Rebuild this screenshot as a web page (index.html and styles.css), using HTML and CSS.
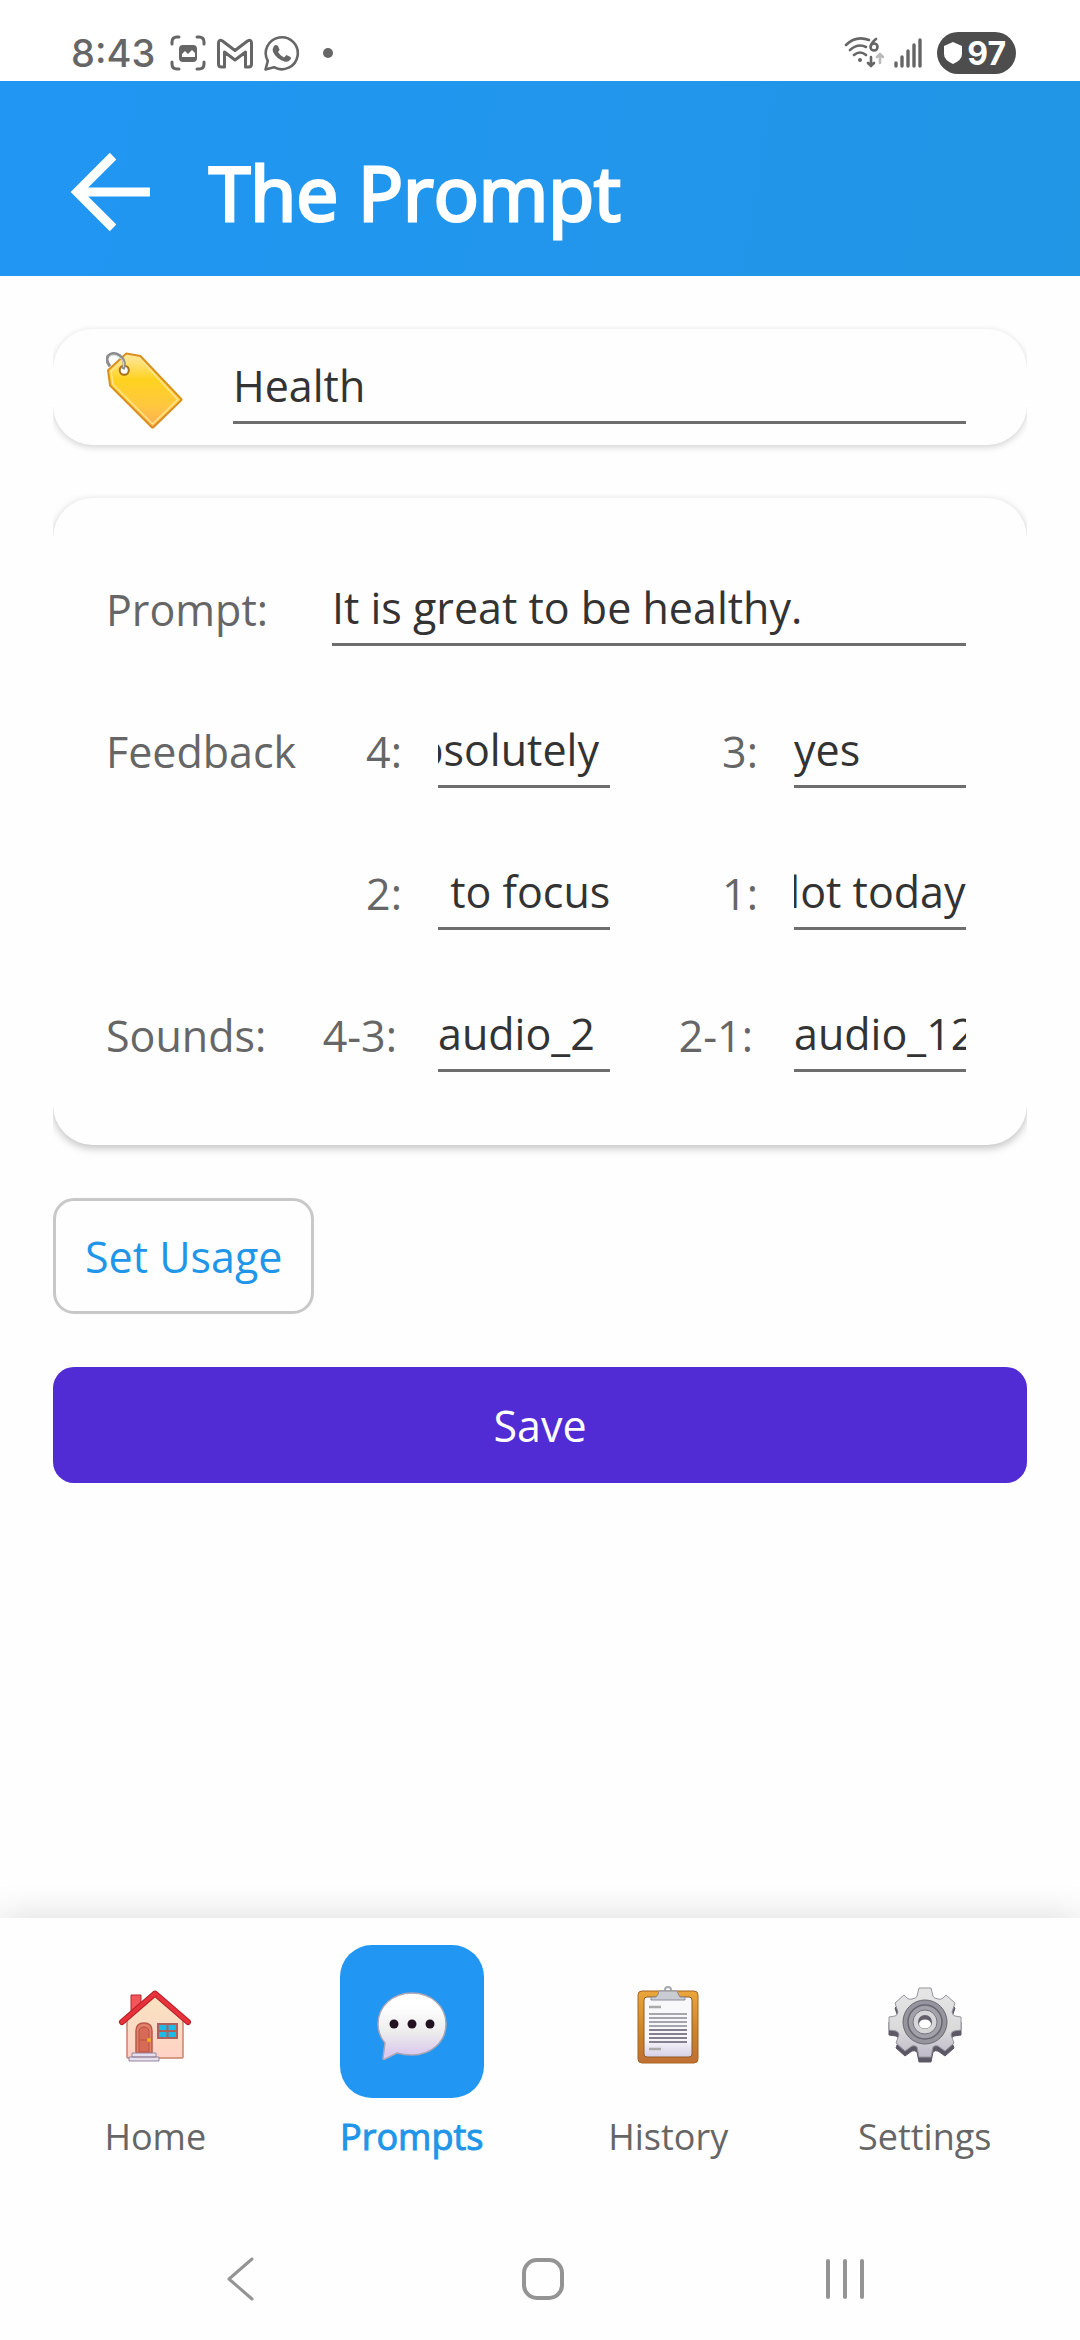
FILE: index.html
```html
<!DOCTYPE html>
<html lang="en">
<head>
  <meta charset="utf-8">
  <meta name="viewport" content="width=device-width, initial-scale=1">
  <title>The Prompt</title>
  <link rel="stylesheet" href="styles.css">
</head>
<body>
  <!-- Phone status bar -->
  <div class="status-bar">
    <div class="status-left">
      <span class="clock">8:43</span>
      <svg class="status-icon" viewBox="0 0 36 36">
        <g fill="none" stroke="#666" stroke-width="3" stroke-linecap="round">
          <path d="M2 9V7q0-5 5-5h2M27 2h2q5 0 5 5v2M34 27v2q0 5-5 5h-2M9 34H7q-5 0-5-5v-2"/>
        </g>
        <rect x="9" y="10" width="18" height="17" rx="4" fill="#666"/>
        <path d="M12 22v-3l3-3 3 3 4-4 3 3v4z" fill="#fff"/>
      </svg>
      <svg class="status-icon" viewBox="0 0 36 36">
        <path d="M1.500 29V8q0-4 4-2l12.500 9.500L30.500 6q4-2 4 2v21q0 3-3 3h-3V17L18 25 7.500 17v15h-3q-3 0-3-3z" fill="none" stroke="#666" stroke-width="3" stroke-linejoin="round"/>
      </svg>
      <svg class="status-icon" viewBox="0 0 36 36">
        <path d="M1.500 34.500l2.300-8.500A16 16 0 1 1 10 32.200z" fill="none" stroke="#666" stroke-width="2.600" stroke-linejoin="round"/>
        <path d="M10 11q2-2 4 0l1.500 3.500q0 1-1.500 2.500 2 3.500 6 5.500l2.500-2.500 4 2q1 .5 0 2.500-2.500 3-6 2-8-2.500-11.500-9.500-1-3.500 1-6z" fill="#666"/>
      </svg>
      <span class="dot"></span>
    </div>
    <div class="status-right">
      <svg class="wifi-icon" viewBox="0 0 42 34">
        <g fill="none" stroke="#666" stroke-width="2.600" stroke-linecap="round">
          <path d="M2 9Q12-1 25 4M6 14q8-7 16-3M10 19q6-5 12 0"/>
          <path d="M27 21v9M24 27l3 3 3-3"/>
          <path d="M32 3q-5 4-5 7"/>
          <circle cx="30" cy="11" r="3.500"/>
          <path d="M36 27v-9M33 21l3-3 3 3" stroke="#bbb"/>
        </g>
        <circle cx="16" cy="24" r="2" fill="#666"/>
      </svg>
      <svg class="signal-icon" viewBox="0 0 28 32">
        <path d="M2 26v3M8 20v9M14 14v15M20 8v21M26 3v26" stroke="#666" stroke-width="3.400" stroke-linecap="round"/>
      </svg>
      <span class="battery">
        <svg class="shield-icon" viewBox="0 0 20 24">
          <path d="M10 1l9 4v8q0 6-9 10Q1 19 1 13V5z" fill="#fff"/>
        </svg>97
      </span>
    </div>
  </div>

  <header class="header">
    <button class="back-btn" aria-label="Back">
      <svg viewBox="0 0 80 80">
        <path d="M42 5L7 40l35 35M7 40h71" fill="none" stroke="#fff" stroke-width="9"/>
      </svg>
    </button>
    <h1 class="title">The Prompt</h1>
  </header>

  <main class="content">
    <div class="card-clip">
      <div class="card tag-card">
        <label class="tag-label" for="category" aria-label="Category">
          <svg viewBox="0 0 76 76">
            <defs>
              <linearGradient id="tagFill" x1="0" y1="0" x2="0" y2="1">
                <stop offset="0" stop-color="#ffe9a8"/>
                <stop offset="0.350" stop-color="#ffd21f"/>
                <stop offset="0.700" stop-color="#ffc83f"/>
                <stop offset="1" stop-color="#ffac55"/>
              </linearGradient>
            </defs>
            <path d="M20 1.500L34 4l40 42q1 1 0 2L47 74q-1 1-2 0L4 33 2 18z" fill="url(#tagFill)" stroke="#d99020" stroke-width="2" stroke-linejoin="round"/>
            <path d="M21 4.500l12 2L71 47 46 71 7 32 5 19z" fill="none" stroke="#ffe58a" stroke-width="1.500" stroke-linejoin="round"/>
            <circle cx="18" cy="18" r="4.500" fill="#fff" stroke="#a8701a" stroke-width="2"/>
            <path d="M17 17q3-8-3-13-7-5-12 0-3 4 2 10" fill="none" stroke="#8d8d8d" stroke-width="3"/>
            <path d="M17 15q2-6-4-10-6-4-10 0" fill="none" stroke="#d8d8d8" stroke-width="1"/>
          </svg>
        </label>
        <input class="entry" id="category" type="text" value="Health">
      </div>
    </div>

    <div class="card-clip">
      <div class="card prompt-card">
        <div class="row row-prompt">
          <label class="label" for="prompt">Prompt:</label>
          <input class="entry" id="prompt" type="text" value="It is great to be healthy.">
        </div>
        <div class="row">
          <span class="label">Feedback</span>
          <label class="label num" for="feedback4">4:</label>
          <input class="entry scroll-end" id="feedback4" type="text" value="Absolutely ">
          <label class="label num" for="feedback3">3:</label>
          <input class="entry" id="feedback3" type="text" value="yes">
        </div>
        <div class="row">
          <span class="label"></span>
          <label class="label num" for="feedback2">2:</label>
          <input class="entry scroll-end" id="feedback2" type="text" value="Need to focus">
          <label class="label num" for="feedback1">1:</label>
          <input class="entry scroll-end" id="feedback1" type="text" value="A lot today">
        </div>
        <div class="row">
          <span class="label">Sounds:</span>
          <label class="label range" for="sound43">4-3:</label>
          <input class="entry" id="sound43" type="text" value="audio_2">
          <label class="label range" for="sound21">2-1:</label>
          <input class="entry" id="sound21" type="text" value="audio_12">
        </div>
      </div>
    </div>

    <button class="btn usage-btn">Set Usage</button>
    <button class="btn save-btn">Save</button>
  </main>

  <nav class="tab-bar">
    <a class="tab" href="#home">
      <span class="tab-icon">
        <svg viewBox="0 0 80 80">
          <defs>
            <linearGradient id="wall" x1="0" y1="0" x2="0" y2="1">
              <stop offset="0" stop-color="#f8e3c0"/>
              <stop offset="1" stop-color="#ffd2c6"/>
            </linearGradient>
          </defs>
          <path d="M12 34L40 10l28 24v38q0 1-1 1H13q-1 0-1-1z" fill="url(#wall)" stroke="#c98468" stroke-width="1.500"/>
          <path d="M16 27V10h10v9z" fill="#f4555a" stroke="#b8272d" stroke-width="1"/>
          <path d="M7 37L40 8.500 73 37" fill="none" stroke="#b41f27" stroke-width="6" stroke-linecap="round" stroke-linejoin="round"/>
          <path d="M7 37L40 8.500 73 37" fill="none" stroke="#e8323b" stroke-width="4" stroke-linecap="round" stroke-linejoin="round"/>
          <path d="M21 68V46q0-8 8-8t8 8v22z" fill="#e2806c" stroke="#b75a48" stroke-width="1.500"/>
          <path d="M24 67V47q0-5 5-5t5 5v20zM24 55h10" fill="#d86a58" stroke="#b9523f" stroke-width="1"/>
          <circle cx="34" cy="55" r="2" fill="#f6b01c"/>
          <path d="M43 39h19v14H43z" fill="#1fb9e6" stroke="#b0605a" stroke-width="2"/>
          <path d="M52.500 39v14M43 46h19" stroke="#b0605a" stroke-width="2"/>
          <path d="M17 68h24v4H17zM14 72h30v4H14z" fill="#e8dfee" stroke="#94849c" stroke-width="1"/>
        </svg>
      </span>
      <span class="tab-label">Home</span>
    </a>
    <a class="tab active" href="#prompts">
      <span class="tab-icon">
        <svg viewBox="0 0 80 80">
          <defs>
            <linearGradient id="bubble" x1="0" y1="0" x2="0" y2="1">
              <stop offset="0.200" stop-color="#fff"/>
              <stop offset="0.600" stop-color="#ececec"/>
              <stop offset="0.900" stop-color="#dccbee"/>
            </linearGradient>
          </defs>
          <path d="M40 8c19 0 34 13 34 31S59 70 40 70q-8 0-15-2L13 74q-2 1-2-1l2-15Q6 50 6 39C6 21 21 8 40 8z" fill="url(#bubble)" stroke="#aaa6b5" stroke-width="1.500"/>
          <circle cx="22" cy="39" r="4.500" fill="#22121f"/>
          <circle cx="40" cy="39" r="4.500" fill="#22121f"/>
          <circle cx="58" cy="39" r="4.500" fill="#22121f"/>
        </svg>
      </span>
      <span class="tab-label">Prompts</span>
    </a>
    <a class="tab" href="#history">
      <span class="tab-icon">
        <svg viewBox="0 0 80 80">
          <defs>
            <linearGradient id="board" x1="0" y1="0" x2="0" y2="1">
              <stop offset="0" stop-color="#eba63c"/>
              <stop offset="0.600" stop-color="#c98328"/>
              <stop offset="1" stop-color="#c07034"/>
            </linearGradient>
            <linearGradient id="paper" x1="0" y1="0" x2="0" y2="1">
              <stop offset="0.700" stop-color="#f8f8fb"/>
              <stop offset="1" stop-color="#d6d0e6"/>
            </linearGradient>
          </defs>
          <rect x="10" y="6" width="60" height="72" rx="4" fill="url(#board)" stroke="#a86420" stroke-width="1"/>
          <rect x="16" y="12" width="48" height="60" rx="3" fill="url(#paper)" stroke="#8f5a24" stroke-width="1"/>
          <path d="M21 22h12M21 64h12" stroke="#aaa" stroke-width="2.500"/>
          <path d="M21 29h38M21 33h38M21 37h38M21 41h38" stroke="#a5a5ad" stroke-width="2"/>
          <path d="M21 45h38M21 49h38M21 53h38M21 57h38" stroke="#85808f" stroke-width="2"/>
          <circle cx="40" cy="5" r="3" fill="none" stroke="#a5a9b0" stroke-width="2"/>
          <path d="M31 6h18q2 5 3 6h4q1 0 1 1v2H23v-2q0-1 1-1h4q2-1 3-6z" fill="#c9ccd3" stroke="#8b8e98" stroke-width="1"/>
        </svg>
      </span>
      <span class="tab-label">History</span>
    </a>
    <a class="tab" href="#settings">
      <span class="tab-icon">
        <svg viewBox="0 0 80 80">
          <defs>
            <linearGradient id="gear" x1="0" y1="0" x2="0" y2="1">
              <stop offset="0" stop-color="#e6e6e6"/>
              <stop offset="0.600" stop-color="#dadada"/>
              <stop offset="1" stop-color="#bdb9c8"/>
            </linearGradient>
            <path id="gearShape" d="M34 3h12l2 8q0 2 5 3 3 1 5-1l3-3 9 8-3 9q1 4 3 4l6 1v13l-7 1q-3 1-3 4l3 8-9 8-7-5q-3-1-5 1l-2 10H34l-2-10q-2-2-5-1l-7 5-9-8 3-8q0-3-3-4l-7-1V32l6-1q2 0 3-4l-3-9 9-8 3 3q2 2 5 1 5-1 5-3z"/>
          </defs>
          <use href="#gearShape" y="4" transform="translate(0 1)" fill="#5c5865" stroke="#5c5865"/>
          <use href="#gearShape" fill="url(#gear)" stroke="#96949c" stroke-width="1"/>
          <circle cx="40" cy="37" r="22" fill="#96959e" stroke="#696872" stroke-width="1"/>
          <circle cx="40" cy="37" r="17" fill="#a2a1aa" stroke="#686771" stroke-width="1.500"/>
          <circle cx="40" cy="37" r="12" fill="#d6d6d8" stroke="#75747d" stroke-width="1"/>
          <circle cx="40" cy="37" r="7" fill="#625f6a"/>
          <ellipse cx="40" cy="39" rx="6" ry="4.500" fill="#fff"/>
        </svg>
      </span>
      <span class="tab-label">Settings</span>
    </a>
  </nav>

  <!-- Phone navigation buttons -->
  <div class="system-nav">
    <button class="system-btn" aria-label="System back">
      <svg viewBox="0 0 44 44"><path d="M34 2L11 22l23 20" fill="none" stroke="#949494" stroke-width="3" stroke-linecap="round" stroke-linejoin="round"/></svg>
    </button>
    <button class="system-btn" aria-label="System home">
      <svg viewBox="0 0 44 44"><rect x="3" y="3" width="38" height="38" rx="13" fill="none" stroke="#949494" stroke-width="4"/></svg>
    </button>
    <button class="system-btn" aria-label="Recent apps">
      <svg viewBox="0 0 44 44"><path d="M5 4v36M22 4v36M39 4v36" stroke="#949494" stroke-width="4" stroke-linecap="round"/></svg>
    </button>
  </div>

  <script>
    // Long feedback stays scrolled to the last typed character
    document.querySelectorAll('.scroll-end').forEach((el) => {
      el.scrollLeft = el.scrollWidth;
    });
  </script>
</body>
</html>
```

FILE: styles.css
```css
:root {
  --blue: #2196f3;
  --purple: #512bd4;
  --text: #333;
  --muted: #666;
  --line: #6e6e6e;
  --gap: 53px;
}

* {
  box-sizing: border-box;
}

body {
  margin: 0;
  min-height: 100vh;
  display: flex;
  flex-direction: column;
  background: #fefefe;
  color: var(--text);
  font-family: 'Open Sans', 'Noto Sans', sans-serif;
  font-size: 43px;
}

button,
input {
  font: inherit;
  color: inherit;
  background: none;
  border: none;
  border-radius: 0;
  padding: 0;
  margin: 0;
  outline: none;
}

button {
  cursor: pointer;
}

svg {
  display: block;
}

/* Status bar */
.status-bar {
  height: 81px;
  padding: 25px 64px 0 71px;
  display: flex;
  justify-content: space-between;
  background: #fff;
  color: var(--muted);
  font-family: Inter, Roboto, sans-serif;
}

.status-left,
.status-right {
  height: 56px;
  display: flex;
  align-items: center;
}

.status-left {
  gap: 11px;
}

.clock {
  font-size: 38px;
  font-weight: 500;
  margin-right: 4px;
}

.status-icon {
  width: 36px;
  height: 36px;
}

.dot {
  width: 10px;
  height: 10px;
  margin-left: 12px;
  border-radius: 50%;
  background: var(--muted);
}

.wifi-icon {
  width: 42px;
  height: 34px;
}

.signal-icon {
  width: 28px;
  height: 32px;
  margin: 0 15px 0 8px;
}

.battery {
  display: flex;
  align-items: center;
  gap: 4px;
  height: 42px;
  padding: 0 10px 0 6px;
  border-radius: 21px;
  background: #4d4d4d;
  color: #fff;
  font-size: 32px;
  font-weight: 700;
}

.shield-icon {
  width: 20px;
  height: 24px;
}

/* Header */
.header {
  height: 195px;
  padding: 26px 70px 0;
  display: flex;
  align-items: center;
  gap: 57px;
  background: linear-gradient(100deg, #2196f3, #2196e5);
  color: #fff;
}

.back-btn svg {
  width: 82px;
  height: 82px;
}

.title {
  margin: 0;
  font-size: 75px;
  font-weight: 400;
  line-height: 108px;
  -webkit-text-stroke: 3px #fff;
}

/* Cards */
.content {
  flex: 1;
  display: flex;
  flex-direction: column;
  align-items: flex-start;
  gap: var(--gap);
  padding: var(--gap);
}

/* Shadows are cut off at the sides of the card */
.card-clip {
  width: 100%;
  clip-path: inset(-4px 0 -20px);
}

.card {
  padding: 0 61px 0 53px;
  border-radius: 40px;
  background: #fefefe;
  box-shadow: 0 3px 8px rgba(0, 0, 0, 0.25);
}

.tag-card {
  display: flex;
  align-items: center;
  gap: 50px;
  box-shadow: 0 2px 7px rgba(0, 0, 0, 0.18);
}

.tag-label {
  padding-top: 7px;
}

.tag-label svg {
  width: 77px;
  height: 77px;
}

.prompt-card {
  display: flex;
  flex-direction: column;
  gap: 26px;
  padding-top: 53px;
  padding-bottom: 52px;
}

.row {
  display: grid;
  grid-template-columns: 210px 122px 1fr 184px 1fr;
  align-items: center;
}

.row-prompt {
  grid-template-columns: 226px 1fr;
}

.label {
  color: var(--muted);
}

.num,
.range {
  text-align: right;
  padding-right: 36px;
}

.range {
  padding-right: 41px;
}

.entry {
  width: 100%;
  min-width: 0;
  height: 95px;
  margin-bottom: 21px;
  padding-top: 20px;
  border-bottom: 3px solid var(--line);
}

/* Buttons */
.btn {
  height: 116px;
  border-radius: 21px;
}

.usage-btn {
  padding: 0 29px;
  border: 3px solid #c8c8c8;
  color: #2196e8;
}

.save-btn {
  width: 100%;
  background: var(--purple);
  color: #fff;
}

/* Tabs */
.tab-bar {
  display: flex;
  padding: 27px 27px 0;
  background: #fefefe;
  box-shadow: 0 0 36px rgba(0, 0, 0, 0.14);
}

.tab {
  flex: 1;
  display: flex;
  flex-direction: column;
  align-items: center;
  gap: 13px;
  color: var(--muted);
  font-size: 36px;
  line-height: 52px;
  text-decoration: none;
}

.tab-icon {
  width: 144px;
  height: 153px;
  padding-top: 6px;
  display: flex;
  align-items: center;
  justify-content: center;
  border-radius: 32px;
}

.tab-icon svg {
  width: 80px;
  height: 80px;
}

.active {
  color: #2196e8;
}

.active .tab-icon {
  background: var(--blue);
}

.active .tab-label {
  -webkit-text-stroke: 1px #2196e8;
}

/* Phone navigation */
.system-nav {
  position: relative;
  display: flex;
  justify-content: space-between;
  height: 177px;
  padding: 94px 213px 0 218px;
  background: #fefefe;
}

.system-btn {
  width: 44px;
  height: 44px;
}
```
